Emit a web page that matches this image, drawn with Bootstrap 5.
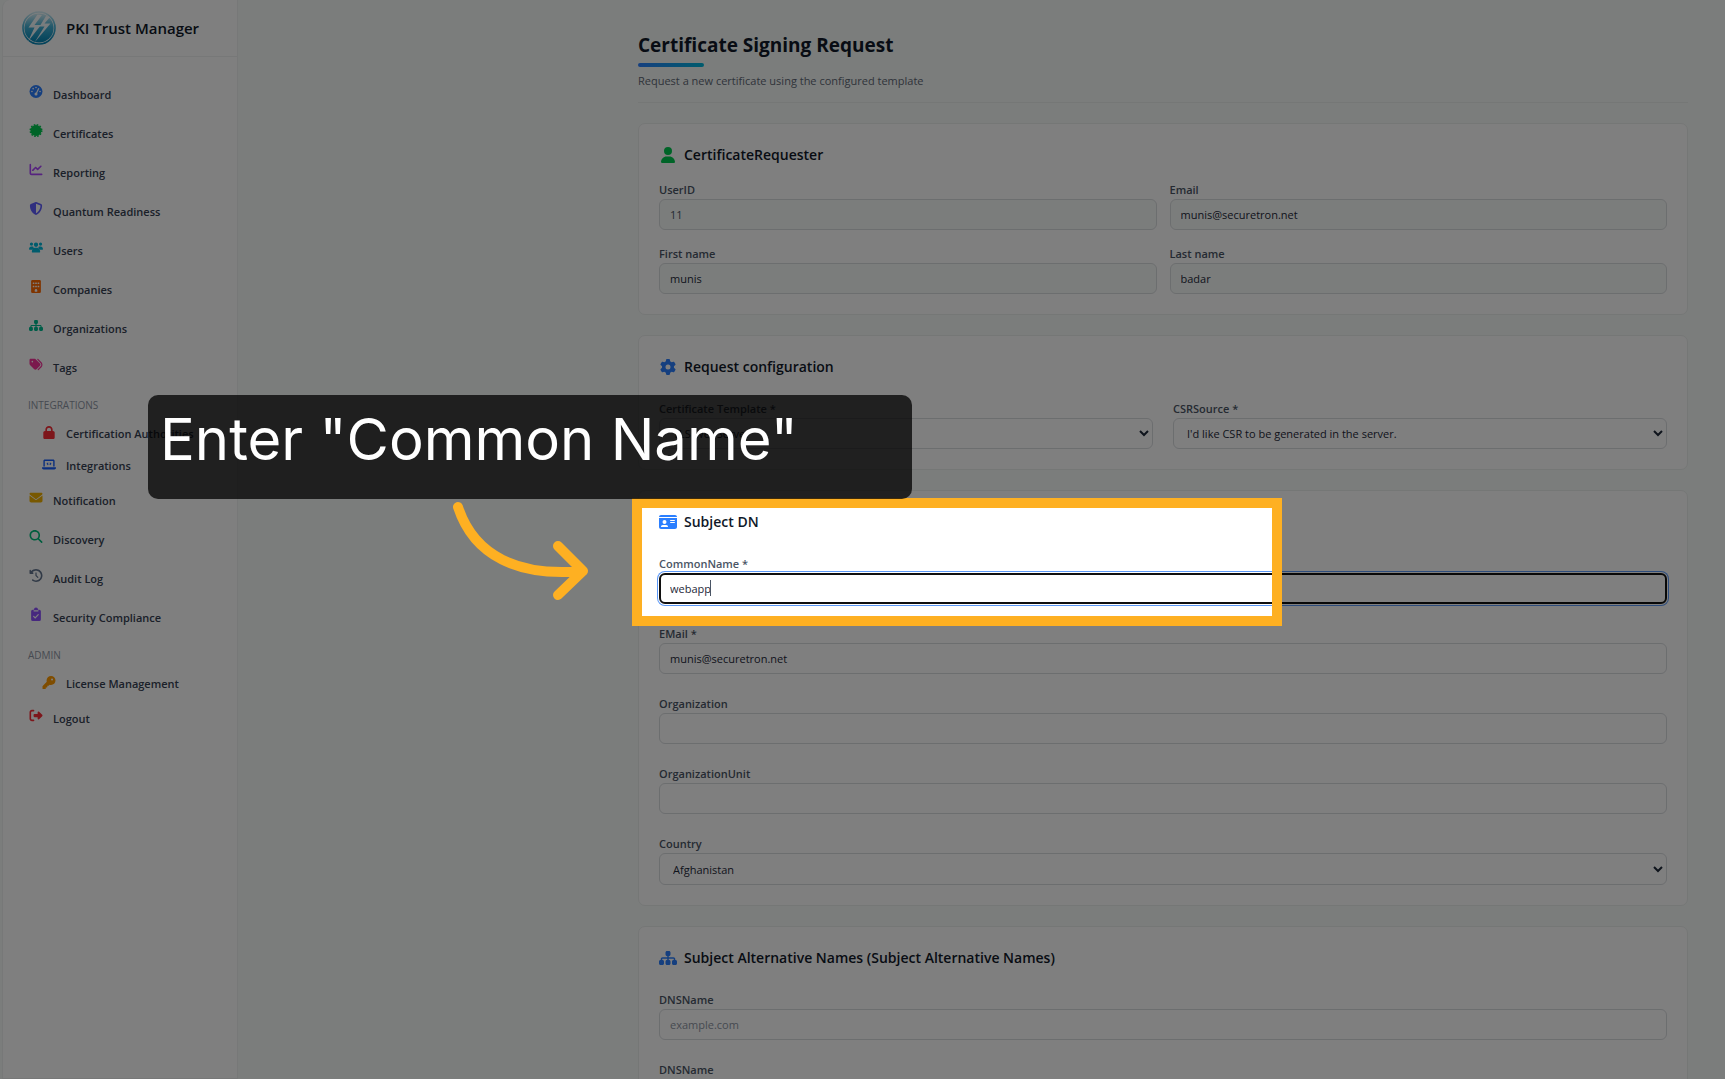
<!DOCTYPE html>
<html lang="en">
<head>
<meta charset="utf-8">
<meta name="viewport" content="width=device-width, initial-scale=1">
<title>PKI Trust Manager</title>
<link href="https://cdn.jsdelivr.net/npm/bootstrap@5.3.0/dist/css/bootstrap.min.css" rel="stylesheet">
<style>
  body { font-family: "Open Sans", "Noto Sans", sans-serif; font-size: 11px; line-height: 17px; color: #1e2939; background: #f7fbf9; }
  .app-shell { height: 100vh; overflow: hidden; }

  /* Sidebar */
  .side-panel { width: 236px; margin-left: 2px; background: #fff; border: 1px solid #eef1f0; border-top: 0; border-radius: 8px 0 0 0; }
  .brand-bar { height: 57px; padding: 0 19px; gap: 10px; border-bottom: 1px solid #eef1f0; font-size: 15px; font-weight: 600; color: #101828; }
  .brand-bar:hover { color: #101828; }
  .menu-list { padding-top: 18px; }
  .menu-link { height: 39px; padding-left: 26px; gap: 10px; font-weight: 600; color: #364153; text-decoration: none; }
  .menu-link svg { width: 14px; height: 13px; margin-bottom: 6px; overflow: visible; }
  .menu-sub { height: 32px; padding-left: 39px; }
  .menu-sub svg { margin-bottom: 2px; }
  .menu-heading { height: 30px; padding: 12px 0 0 25px; font-size: 10px; font-weight: 400; color: #8d95a3; margin: 0; }

  /* Content */
  .page-main { padding: 33px 37px 0 400px; min-width: 0; }
  .page-head { padding-bottom: 13px; margin-bottom: 20px; border-bottom: 1px solid #ebeeed; }
  .page-head h1 { font-size: 19px; line-height: 25px; font-weight: 700; color: #101828; margin: 0 0 5px; }
  .accent-bar { width: 66px; height: 4px; border-radius: 2px; background: linear-gradient(90deg, #2b7fff, #00b8db); margin-bottom: 5px; }
  .page-head p { color: #5f6875; margin: 0; }
  .panel { background: #fff; border: 1px solid #ebeeed; border-radius: 7px; padding: 20px; margin-bottom: 20px; }
  .panel h2 { font-size: 14px; line-height: 21px; font-weight: 600; color: #101828; gap: 7px; margin: 0 0 24px; }
  .panel h2 svg { width: 18px; height: 16px; }
  .panel .tight { margin-bottom: 17px; }
  .field-label { display: block; line-height: 15px; margin-bottom: 2px; font-weight: 600; color: #4a5565; }
  .field-box { display: block; width: 100%; height: 31px; padding: 0 10px; border: 1px solid #d9dcdf; border-radius: 6px; background: #fff; color: #1e2939; outline: 0; }
  .field-box[readonly] { background: #f7fbf9; }
  .field-box.muted-value { color: #4a5565; }
  .field-box::placeholder { color: #8d95a3; }
  .field-box.is-active { border: 2px solid #101010; box-shadow: 0 0 0 1px #fff, 0 0 0 2px #5a98f8; padding: 0 9px; }
  select.field-box { padding: 0 0 0 9px; }
  .pair { display: grid; grid-template-columns: 1fr 1fr; gap: 16px 13px; }
  .pair-wide { column-gap: 20px; }
  .field-stack { gap: 22px; }
  .tall-select { height: 32px; }
  .text-caret { position: absolute; left: 51px; bottom: 8px; width: 1px; height: 16px; background: #4a5565; }

  /* Guided tour layer */
  .tour { position: absolute; inset: 0; overflow: hidden; pointer-events: none; }
  .tour-spot { position: absolute; left: 632px; top: 498px; width: 650px; height: 128px; border: 10px solid #feb022; box-shadow: 0 0 0 3000px rgba(0, 0, 0, .5); }
  .tour-note { position: absolute; left: 148px; top: 395px; width: 764px; height: 104px; padding: 8px 12px; border-radius: 10px; background: rgba(0, 0, 0, .75); color: #fff; font-family: Inter, sans-serif; font-size: 58px; line-height: 72px; white-space: nowrap; }
  .tour-arrow { position: absolute; left: 448px; top: 498px; width: 146px; height: 108px; }
</style>
<script src="https://cdn.jsdelivr.net/npm/bootstrap@5.3.0/dist/js/bootstrap.bundle.min.js"></script>
</head>
<body>
<div class="app-shell d-flex position-relative">

  <nav class="side-panel flex-shrink-0" aria-label="Main">
    <a href="#" class="brand-bar d-flex align-items-center text-decoration-none">
      <svg width="34" height="34" viewBox="0 0 34 34" aria-hidden="true">
        <defs><linearGradient id="lg" x1="0" y1="0" x2="0" y2="1"><stop offset="0" stop-color="#d5eef5"/><stop offset=".45" stop-color="#45b2d6"/><stop offset="1" stop-color="#0284b4"/></linearGradient></defs>
        <circle cx="17" cy="17" r="14.6" fill="url(#lg)"/>
        <circle cx="17" cy="17" r="16" fill="none" stroke="url(#lg)" stroke-width="1.6"/>
        <path d="M15.500 3.500 6.500 16.500h6L6 30.500 19 14h-6.500L20 4zM24 5 17.500 15.500h5L12.500 31.500 28.500 12.500h-6L28 6z" fill="#fff" opacity=".92"/>
      </svg>
      PKI Trust Manager
    </a>
    <div class="menu-list d-flex flex-column">
      <a href="#" class="menu-link d-flex align-items-center"><svg viewBox="0 0 512 512"><circle cx="256" cy="256" r="256" fill="#2b7fff"/><g fill="#fff"><circle cx="256" cy="96" r="32"/><circle cx="144" cy="144" r="32"/><circle cx="96" cy="256" r="32"/><circle cx="416" cy="256" r="32"/><circle cx="256" cy="352" r="60"/><path d="M345 118l44 20-108 226-44-20z"/></g></svg>Dashboard</a>
      <a href="#" class="menu-link d-flex align-items-center"><svg viewBox="0 0 512 512"><circle cx="256" cy="256" r="215" fill="#00c950"/><circle cx="256" cy="256" r="226" fill="none" stroke="#00c950" stroke-width="60" stroke-dasharray="64 54.330"/></svg>Certificates</a>
      <a href="#" class="menu-link d-flex align-items-center"><svg viewBox="0 0 512 512" fill="#ad46ff"><path d="M64 64c0-17.700-14.300-32-32-32S0 46.300 0 64V400c0 44.200 35.800 80 80 80H480c17.700 0 32-14.300 32-32s-14.300-32-32-32H80c-8.800 0-16-7.200-16-16V64zm406.600 86.600c12.500-12.500 12.500-32.800 0-45.300s-32.800-12.500-45.300 0L320 210.700l-57.400-57.400c-12.500-12.500-32.800-12.500-45.300 0l-112 112c-12.500 12.500-12.500 32.800 0 45.300s32.800 12.500 45.300 0L240 221.300l57.400 57.400c12.500 12.500 32.800 12.500 45.300 0l128-128z"/></svg>Reporting</a>
      <a href="#" class="menu-link d-flex align-items-center"><svg viewBox="0 0 512 512" fill="#615fff"><path d="M256 0c4.600 0 9.200 1 13.400 2.900L457.700 82.800c22 9.300 38.400 31 38.300 57.200c-.5 99.200-41.300 280.700-213.600 363.200c-16.700 8-36.100 8-52.800 0C57.300 420.700 16.500 239.200 16 140c-.1-26.200 16.300-47.900 38.300-57.200L242.700 2.900C246.800 1 251.400 0 256 0zm0 66.800V444.800C394 378 431.100 230.100 432 141.400L256 66.800z"/></svg>Quantum Readiness</a>
      <a href="#" class="menu-link d-flex align-items-center"><svg viewBox="0 0 640 512" fill="#00b8db"><circle cx="320" cy="130" r="98"/><circle cx="112" cy="100" r="74"/><circle cx="528" cy="100" r="74"/><path d="M128 460c0-110 70-190 140-190h104c70 0 140 80 140 190 0 12-10 20-20 20H148c-10 0-20-8-20-20zM0 330c0-70 45-125 105-125h40c20 0 40 8 55 18 0 30 8 50 25 70-45 25-75 55-85 65H22c-12 0-22-10-22-28zM640 330c0-70-45-125-105-125h-40c-20 0-40 8-55 18 0 30-8 50-25 70 45 25 75 55 85 65h118c12 0 22-10 22-28z"/></svg>Users</a>
      <a href="#" class="menu-link d-flex align-items-center"><svg viewBox="0 0 384 512"><rect width="384" height="512" rx="48" fill="#ff6900"/><g fill="#fff"><rect x="64" y="96" width="64" height="64" rx="14"/><rect x="160" y="96" width="64" height="64" rx="14"/><rect x="256" y="96" width="64" height="64" rx="14"/><rect x="64" y="224" width="64" height="64" rx="14"/><rect x="160" y="224" width="64" height="64" rx="14"/><rect x="256" y="224" width="64" height="64" rx="14"/><path d="M144 464v-64a48 48 0 0 1 96 0v64z"/></g></svg>Companies</a>
      <a href="#" class="menu-link d-flex align-items-center"><svg viewBox="0 0 576 512" fill="#00bb90"><path d="M208 80c0-26.500 21.500-48 48-48h64c26.500 0 48 21.500 48 48v64c0 26.500-21.500 48-48 48h-8v40H464c30.900 0 56 25.100 56 56v32h8c26.500 0 48 21.500 48 48v64c0 26.500-21.500 48-48 48H464c-26.500 0-48-21.500-48-48V368c0-26.500 21.500-48 48-48h8V288c0-4.400-3.600-8-8-8H312v40h8c26.500 0 48 21.500 48 48v64c0 26.500-21.500 48-48 48H256c-26.500 0-48-21.500-48-48V368c0-26.500 21.500-48 48-48h8V280H112c-4.400 0-8 3.600-8 8v32h8c26.500 0 48 21.500 48 48v64c0 26.500-21.500 48-48 48H48c-26.500 0-48-21.500-48-48V368c0-26.500 21.500-48 48-48h8V288c0-30.900 25.100-56 56-56H264V192h-8c-26.500 0-48-21.500-48-48V80z" id="tree"/></svg>Organizations</a>
      <a href="#" class="menu-link d-flex align-items-center"><svg viewBox="0 0 512 512" fill="#f6339a"><path d="M345 39.100L472.800 168.400c52.400 53 52.400 138.200 0 191.200L360.800 472.900c-9.300 9.400-24.500 9.500-33.900 .2s-9.500-24.500-.2-33.900L438.600 325.900c33.900-34.300 33.900-89.400 0-123.700L310.900 72.900c-9.300-9.400-9.200-24.600 .2-33.900s24.600-9.200 33.900 .2zM0 229.500V80C0 53.500 21.500 32 48 32H197.500c17 0 33.300 6.700 45.300 18.700l168 168c25 25 25 65.500 0 90.500L277.300 442.700c-25 25-65.500 25-90.500 0l-168-168C6.700 262.700 0 246.500 0 229.500zM144 144a32 32 0 1 0 -64 0 32 32 0 1 0 64 0z"/></svg>Tags</a>
      <h2 class="menu-heading">INTEGRATIONS</h2>
      <a href="#" class="menu-link menu-sub d-flex align-items-center"><svg viewBox="0 0 448 512" fill="#fb2c36"><path d="M144 144v48H304V144c0-44.200-35.800-80-80-80s-80 35.800-80 80zM80 192V144C80 64.500 144.500 0 224 0s144 64.500 144 144v48h16c35.300 0 64 28.700 64 64V448c0 35.300-28.700 64-64 64H64c-35.300 0-64-28.700-64-64V256c0-35.300 28.700-64 64-64H80z"/></svg>Certification Authorities</a>
      <a href="#" class="menu-link menu-sub d-flex align-items-center"><svg viewBox="0 0 640 512" fill="#155dfc"><path fill-rule="evenodd" d="M64 96c0-35 29-64 64-64h384c35 0 64 29 64 64v256h-64V96H128v256H64zM0 403c0-11 8-19 19-19h602c11 0 19 8 19 19 0 43-34 77-77 77H77c-43 0-77-34-77-77z"/><path d="M285 175l-48 49 48 49M355 175l48 49-48 49" fill="none" stroke="#155dfc" stroke-width="46"/></svg>Integrations</a>
      <a href="#" class="menu-link d-flex align-items-center"><svg viewBox="0 0 512 512" fill="#f0b100"><path d="M48 64C21.500 64 0 85.500 0 112c0 15.100 7.100 29.300 19.200 38.400L236.800 313.600c11.400 8.500 27 8.500 38.400 0L492.800 150.400c12.100-9.100 19.200-23.300 19.200-38.400c0-26.500-21.500-48-48-48H48zM0 176V384c0 35.300 28.700 64 64 64H448c35.300 0 64-28.700 64-64V176L294.400 339.200c-22.800 17.100-54 17.100-76.800 0L0 176z"/></svg>Notification</a>
      <a href="#" class="menu-link d-flex align-items-center"><svg viewBox="0 0 512 512" fill="#00bc7d"><path d="M416 208c0 45.900-14.900 88.300-40 122.700L502.600 457.400c12.500 12.500 12.500 32.800 0 45.300s-32.800 12.500-45.300 0L330.700 376c-34.400 25.200-76.800 40-122.700 40C93.100 416 0 322.900 0 208S93.100 0 208 0S416 93.100 416 208zM208 352a144 144 0 1 0 0-288 144 144 0 1 0 0 288z"/></svg>Discovery</a>
      <a href="#" class="menu-link d-flex align-items-center"><svg viewBox="0 0 512 512" fill="#62748e"><path d="M75 75L41 41C25.900 25.900 0 36.600 0 57.900V168c0 13.300 10.700 24 24 24H134.100c21.400 0 32.100-25.900 17-41l-30.800-30.800C155 85.500 203 64 256 64c106 0 192 86 192 192s-86 192-192 192c-40.800 0-78.600-12.700-109.700-34.400c-14.500-10.100-34.400-6.600-44.600 7.900s-6.600 34.400 7.900 44.600C151.200 495 201.700 512 256 512c141.400 0 256-114.600 256-256S397.400 0 256 0C185.300 0 121.300 28.700 75 75zm181 53c-13.300 0-24 10.700-24 24V256c0 6.400 2.500 12.500 7 17l72 72c9.400 9.400 24.600 9.400 33.900 0s9.400-24.600 0-33.900l-65-65V152c0-13.300-10.700-24-24-24z"/></svg>Audit Log</a>
      <a href="#" class="menu-link d-flex align-items-center"><svg viewBox="0 0 384 512"><path d="M64 64h256a64 64 0 0 1 64 64v320a64 64 0 0 1-64 64H64a64 64 0 0 1-64-64V128a64 64 0 0 1 64-64zM112 64a80 80 0 0 1 160 0z" fill="#8e51ff"/><path d="M112 112h160" stroke="#fff" stroke-width="44" stroke-linecap="round"/><path d="M100 330l60 60 120-130" fill="none" stroke="#fff" stroke-width="46" stroke-linecap="round"/></svg>Security Compliance</a>
      <h2 class="menu-heading">ADMIN</h2>
      <a href="#" class="menu-link menu-sub d-flex align-items-center"><svg viewBox="0 0 512 512" fill="#fe9a00"><path d="M336 352c97.200 0 176-78.800 176-176S433.200 0 336 0S160 78.800 160 176c0 18.700 2.900 36.800 8.300 53.700L7 391c-4.500 4.500-7 10.600-7 17v80c0 13.300 10.700 24 24 24h80c13.300 0 24-10.700 24-24V448h40c13.300 0 24-10.700 24-24V384h40c6.400 0 12.500-2.500 17-7l33.300-33.300c16.900 5.400 35 8.300 53.700 8.300zM376 96a40 40 0 1 1 0 80 40 40 0 1 1 0-80z"/></svg>License Management</a>
      <a href="#" class="menu-link d-flex align-items-center"><svg viewBox="0 0 512 512" fill="#fb2c36"><path d="M377.900 105.900L500.700 228.700c7.200 7.200 11.300 17.100 11.300 27.300s-4.100 20.100-11.300 27.300L377.900 406.100c-6.400 6.400-15 9.900-24 9.900c-18.700 0-33.900-15.200-33.900-33.900l0-62.100-128 0c-17.700 0-32-14.300-32-32l0-64c0-17.700 14.300-32 32-32l128 0 0-62.100c0-18.700 15.200-33.900 33.900-33.900c9 0 17.600 3.600 24 9.900zM160 96L96 96c-17.700 0-32 14.300-32 32l0 256c0 17.700 14.300 32 32 32l64 0c17.700 0 32 14.300 32 32s-14.300 32-32 32l-64 0c-53 0-96-43-96-96L0 128C0 75 43 32 96 32l64 0c17.700 0 32 14.300 32 32s-14.300 32-32 32z"/></svg>Logout</a>
    </div>
  </nav>

  <main class="page-main flex-grow-1">
    <header class="page-head">
      <h1>Certificate Signing Request</h1>
      <div class="accent-bar"></div>
      <p>Request a new certificate using the configured template</p>
    </header>

    <form>
      <section class="panel">
        <h2 class="tight d-flex align-items-center"><svg viewBox="0 0 448 512" fill="#00c950"><path d="M224 256A128 128 0 1 0 224 0a128 128 0 1 0 0 256zm-45.700 48C79.800 304 0 383.800 0 482.300C0 498.700 13.300 512 29.700 512H418.300c16.400 0 29.700-13.300 29.700-29.700C448 383.800 368.200 304 269.700 304H178.300z"/></svg>CertificateRequester</h2>
        <div class="pair">
          <div><label class="field-label" for="uid">UserID</label><input class="field-box muted-value" id="uid" type="text" value="11" readonly></div>
          <div><label class="field-label" for="mail">Email</label><input class="field-box" id="mail" type="text" value="munis@securetron.net" readonly></div>
          <div><label class="field-label" for="first">First name</label><input class="field-box" id="first" type="text" value="munis" readonly></div>
          <div><label class="field-label" for="last">Last name</label><input class="field-box" id="last" type="text" value="badar" readonly></div>
        </div>
      </section>

      <section class="panel">
        <h2 class="d-flex align-items-center"><svg viewBox="0 0 512 512" fill="#2b7fff"><path d="M495.900 166.600c3.200 8.700 .5 18.400-6.400 24.600l-43.300 39.400c1.100 8.300 1.700 16.800 1.700 25.400s-.6 17.100-1.700 25.400l43.300 39.400c6.900 6.200 9.600 15.900 6.400 24.600c-4.400 11.900-9.700 23.300-15.800 34.300l-4.700 8.100c-6.600 11-14 21.400-22.100 31.200c-5.900 7.200-15.700 9.600-24.500 6.800l-55.700-17.700c-13.400 10.300-28.200 18.900-44 25.400l-12.500 57.100c-2 9.100-9 16.300-18.200 17.800c-13.800 2.300-28 3.500-42.500 3.500s-28.700-1.200-42.500-3.500c-9.200-1.500-16.200-8.700-18.200-17.800l-12.500-57.100c-15.800-6.500-30.600-15.100-44-25.400L83.100 425.900c-8.800 2.800-18.600 .3-24.500-6.800c-8.100-9.800-15.500-20.200-22.100-31.200l-4.700-8.100c-6.100-11-11.400-22.400-15.800-34.300c-3.200-8.700-.5-18.400 6.400-24.600l43.300-39.400C64.600 273.100 64 264.600 64 256s.6-17.100 1.700-25.400L22.400 191.200c-6.900-6.200-9.600-15.900-6.400-24.600c4.400-11.900 9.700-23.300 15.800-34.300l4.700-8.100c6.600-11 14-21.400 22.100-31.200c5.900-7.200 15.700-9.600 24.500-6.800l55.700 17.700c13.400-10.300 28.200-18.900 44-25.400l12.500-57.100c2-9.100 9-16.300 18.200-17.800C227.300 1.200 241.500 0 256 0s28.700 1.200 42.500 3.500c9.200 1.500 16.200 8.700 18.200 17.800l12.500 57.100c15.800 6.500 30.600 15.100 44 25.400l55.700-17.700c8.800-2.800 18.600-.3 24.500 6.800c8.100 9.800 15.500 20.200 22.100 31.200l4.700 8.100c6.100 11 11.400 22.400 15.800 34.300zM256 336a80 80 0 1 0 0-160 80 80 0 1 0 0 160z"/></svg>Request configuration</h2>
        <div class="pair pair-wide">
          <div><label class="field-label" for="tpl">Certificate Template *</label><select class="field-box" id="tpl"><option>TLS WebServer</option></select></div>
          <div><label class="field-label" for="csr">CSRSource *</label><select class="field-box" id="csr"><option>I'd like CSR to be generated in the server.</option></select></div>
        </div>
      </section>

      <section class="panel">
        <h2 class="d-flex align-items-center"><svg viewBox="0 0 576 512" fill="#2b7fff"><path d="M0 96l576 0c0-35.300-28.700-64-64-64H64C28.700 32 0 60.700 0 96zm0 32V416c0 35.300 28.700 64 64 64H512c35.300 0 64-28.700 64-64V128H0zM64 405.300c0-29.500 23.900-53.300 53.300-53.300H234.700c29.500 0 53.300 23.900 53.300 53.300c0 5.900-4.800 10.700-10.700 10.700H74.700c-5.900 0-10.700-4.800-10.700-10.700zM176 192a64 64 0 1 1 0 128 64 64 0 1 1 0-128zm176 16c0-8.800 7.200-16 16-16H496c8.800 0 16 7.200 16 16s-7.200 16-16 16H368c-8.800 0-16-7.200-16-16zm0 64c0-8.800 7.200-16 16-16H496c8.800 0 16 7.200 16 16s-7.200 16-16 16H368c-8.800 0-16-7.200-16-16z"/></svg>Subject DN</h2>
        <div class="field-stack d-flex flex-column">
          <div class="position-relative"><label class="field-label" for="cn">CommonName *</label><input class="field-box is-active" id="cn" type="text" value="webapp"><span class="text-caret"></span></div>
          <div><label class="field-label" for="em">EMail *</label><input class="field-box" id="em" type="text" value="munis@securetron.net"></div>
          <div><label class="field-label" for="org">Organization</label><input class="field-box" id="org" type="text"></div>
          <div><label class="field-label" for="ou">OrganizationUnit</label><input class="field-box" id="ou" type="text"></div>
          <div><label class="field-label" for="co">Country</label><select class="field-box tall-select" id="co"><option>Afghanistan</option></select></div>
        </div>
      </section>

      <section class="panel">
        <h2 class="d-flex align-items-center"><svg viewBox="0 0 576 512" fill="#2b7fff"><use href="#tree"/></svg>Subject Alternative Names (Subject Alternative Names)</h2>
        <div class="field-stack d-flex flex-column">
          <div><label class="field-label" for="dns1">DNSName</label><input class="field-box" id="dns1" type="text" placeholder="example.com"></div>
          <div><label class="field-label" for="dns2">DNSName</label><input class="field-box" id="dns2" type="text"></div>
        </div>
      </section>
    </form>
  </main>

  <div class="tour">
    <div class="tour-spot"></div>
    <div class="tour-note">Enter "Common Name"</div>
    <svg class="tour-arrow" viewBox="448 498 146 108" fill="none" stroke="#feb022" stroke-width="10" stroke-linecap="round" stroke-linejoin="round" aria-hidden="true"><path d="M458 507C474 556 518 577 583 571M558 546l25 25-25 24"/></svg>
  </div>
</div>
</body>
</html>
